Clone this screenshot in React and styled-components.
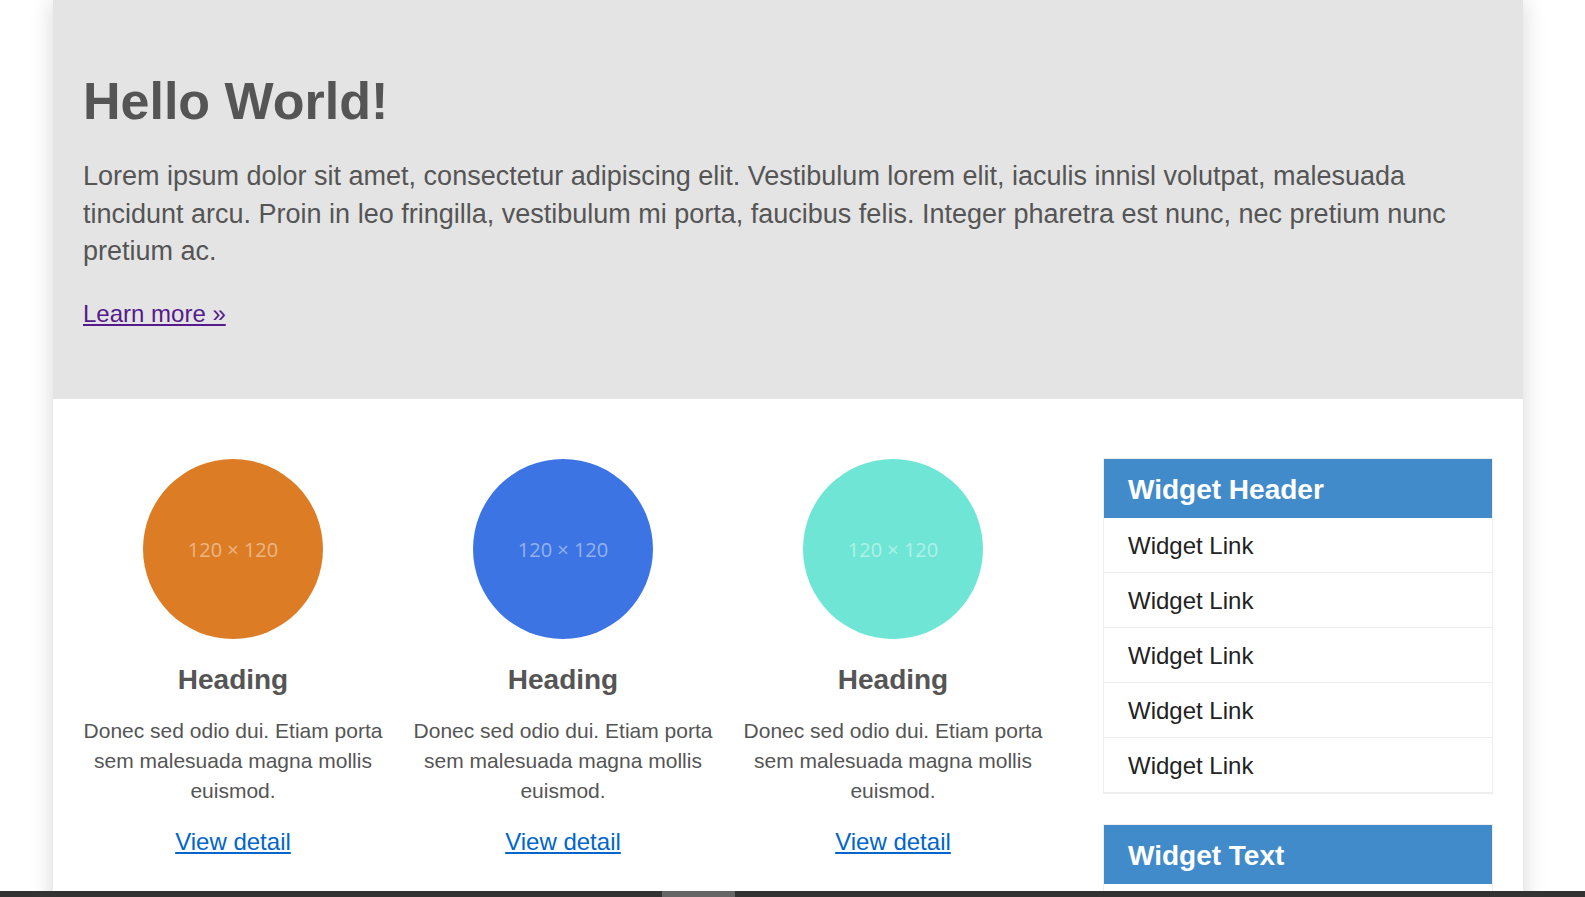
import React from 'react';
import styled, { createGlobalStyle } from 'styled-components';

const GlobalStyle = createGlobalStyle`
  html, body {
    margin: 0;
    padding: 0;
    background: #ffffff;
    font-family: "Liberation Sans", Arial, sans-serif;
    overflow: hidden;
  }
`;

const Page = styled.div`
  width: 1470px;
  margin-left: 53px;
  background: #ffffff;
  box-shadow: 0 0 22px rgba(0, 0, 0, 0.16);
  min-height: 897px;
`;

const Jumbotron = styled.header`
  background: #e4e4e4;
  height: 399px;
  box-sizing: border-box;
  padding: 73px 30px 0;
  color: #555555;
`;

const Title = styled.h1`
  margin: 0 0 28px;
  font-size: 52px;
  line-height: 1.1;
  font-weight: 700;
`;

const Lead = styled.p`
  margin: 0 0 24px;
  font-size: 27px;
  line-height: 37.6px;
`;

const MoreRow = styled.p`
  margin: 0;
  font-size: 24px;
  line-height: 37.5px;
`;

const MoreLink = styled.a`
  color: #551a8b;
  text-decoration: underline;
`;

const Content = styled.main`
  display: flex;
  gap: 60px;
  padding: 60px 30px 0;
`;

const Features = styled.section`
  display: grid;
  grid-template-columns: repeat(3, 300px);
  column-gap: 30px;
`;

const Feature = styled.article`
  display: flex;
  flex-direction: column;
  align-items: center;
  text-align: center;
  color: #555555;
`;

const Thumb = styled.div`
  width: 180px;
  height: 180px;
  border-radius: 50%;
  background: ${(p) => p.color};
  display: flex;
  align-items: center;
  justify-content: center;
  font-family: "Open Sans", "Noto Sans", sans-serif;
  font-weight: 400;
  font-size: 20px;
  color: rgba(255, 255, 255, 0.45);
`;

const FeatureHeading = styled.h2`
  margin: 24px 0 19px;
  font-size: 28px;
  line-height: 33.6px;
  font-weight: 700;
`;

const FeatureText = styled.p`
  margin: 0 0 18px;
  font-size: 21px;
  line-height: 30px;
`;

const DetailLink = styled.a`
  font-size: 24px;
  line-height: 36px;
  color: #0066cc;
  text-decoration: underline;
`;

const Sidebar = styled.aside`
  flex: 1;
  margin-top: -1px;
  display: flex;
  flex-direction: column;
  gap: 30px;
`;

const Widget = styled.div`
  border: 1px solid #eeeeee;
`;

const WidgetHeader = styled.h3`
  margin: 0;
  background: #428bca;
  color: #ffffff;
  font-size: 28px;
  font-weight: 700;
  box-sizing: border-box;
  height: 59px;
  padding: 3px 24px 0;
  line-height: 56px;
`;

const WidgetLink = styled.a`
  display: block;
  padding: 2px 24px 0;
  font-size: 24px;
  line-height: 52px;
  color: #222222;
  text-decoration: none;
  border-bottom: 1px solid #eeeeee;
`;

const WidgetBody = styled.p`
  margin: 0;
  padding: 16px 24px;
  font-size: 20px;
  line-height: 30px;
  color: #555555;
`;

const ScrollBar = styled.div`
  position: fixed;
  left: 0;
  right: 0;
  bottom: 0;
  height: 6px;
  background: #333333;
`;

const ScrollThumb = styled.div`
  position: absolute;
  top: 0;
  bottom: 0;
  left: 662px;
  width: 73px;
  background: #666666;
`;

const features = [
  { color: '#dc7d26' },
  { color: '#3d74e4' },
  { color: '#6fe6d5' },
];

function App() {
  return (
    <>
      <GlobalStyle />
      <Page>
        <Jumbotron>
          <Title>Hello World!</Title>
          <Lead>
            Lorem ipsum dolor sit amet, consectetur adipiscing elit. Vestibulum lorem elit, iaculis innisl volutpat,
            malesuada tincidunt arcu. Proin in leo fringilla, vestibulum mi porta, faucibus felis. Integer pharetra est
            nunc, nec pretium nunc pretium ac.
          </Lead>
          <MoreRow>
            <MoreLink href="#">Learn more »</MoreLink>
          </MoreRow>
        </Jumbotron>
        <Content>
          <Features>
            {features.map((item, i) => (
              <Feature key={i}>
                <Thumb color={item.color}>120 × 120</Thumb>
                <FeatureHeading>Heading</FeatureHeading>
                <FeatureText>Donec sed odio dui. Etiam porta sem malesuada magna mollis euismod.</FeatureText>
                <DetailLink href="#">View detail</DetailLink>
              </Feature>
            ))}
          </Features>
          <Sidebar>
            <Widget>
              <WidgetHeader>Widget Header</WidgetHeader>
              {[1, 2, 3, 4, 5].map((n) => (
                <WidgetLink key={n} href="#">
                  Widget Link
                </WidgetLink>
              ))}
            </Widget>
            <Widget>
              <WidgetHeader>Widget Text</WidgetHeader>
              <WidgetBody>Donec sed odio dui. Etiam porta sem malesuada magna mollis euismod.</WidgetBody>
            </Widget>
          </Sidebar>
        </Content>
      </Page>
      <ScrollBar>
        <ScrollThumb />
      </ScrollBar>
    </>
  );
}

export default App;
